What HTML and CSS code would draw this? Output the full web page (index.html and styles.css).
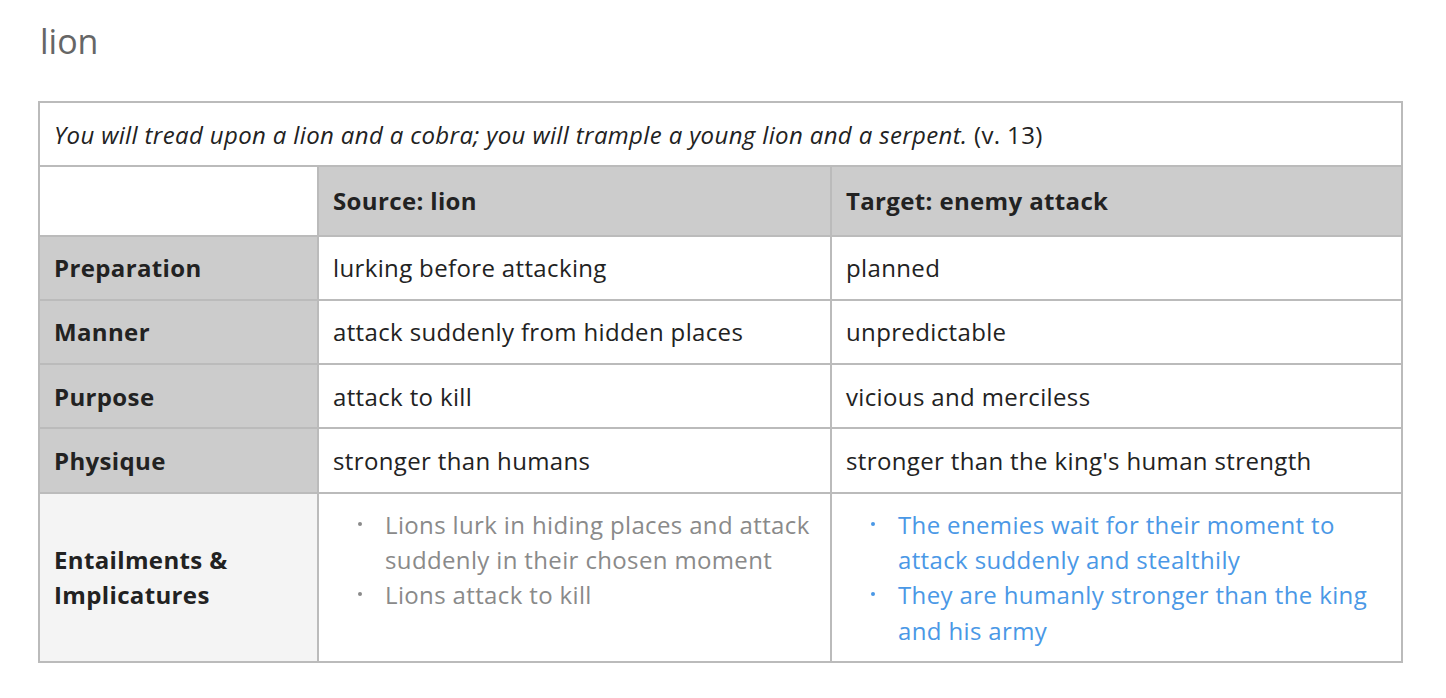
FILE: index.html
```html
<!DOCTYPE html>
<html>
<head>
<meta charset="utf-8">
<link rel="stylesheet" href="styles.css">
</head>
<body>
<div class="page">
  <h1 class="title">lion</h1>
  <table class="meta">
    <colgroup>
      <col class="c1"><col class="c2"><col class="c3">
    </colgroup>
    <tr>
      <td colspan="3" class="verse"><em>You will tread upon a lion and a cobra; you will trample a young lion and a serpent.</em> (v. 13)</td>
    </tr>
    <tr class="head">
      <td class="blank"></td>
      <th>Source: lion</th>
      <th>Target: enemy attack</th>
    </tr>
    <tr>
      <th class="rowh">Preparation</th>
      <td>lurking before attacking</td>
      <td>planned</td>
    </tr>
    <tr>
      <th class="rowh">Manner</th>
      <td>attack suddenly from hidden places</td>
      <td>unpredictable</td>
    </tr>
    <tr>
      <th class="rowh">Purpose</th>
      <td>attack to kill</td>
      <td>vicious and merciless</td>
    </tr>
    <tr>
      <th class="rowh">Physique</th>
      <td>stronger than humans</td>
      <td>stronger than the king's human strength</td>
    </tr>
    <tr class="ent">
      <th class="rowh light">Entailments &amp;<br>Implicatures</th>
      <td>
        <ul class="list gray">
          <li>Lions lurk in hiding places and attack suddenly in their chosen moment</li>
          <li>Lions attack to kill</li>
        </ul>
      </td>
      <td>
        <ul class="list blue">
          <li>The enemies wait for their moment to attack suddenly and stealthily</li>
          <li>They are humanly stronger than the king and his army</li>
        </ul>
      </td>
    </tr>
  </table>
</div>
</body>
</html>
```

FILE: styles.css
```css
html, body {
  margin: 0;
  padding: 0;
  background: #fff;
}
body {
  font-family: "Open Sans", "DejaVu Sans", sans-serif;
  color: #222;
}
.page {
  padding: 14px 38px 0 38px;
}
.title {
  font-size: 34px;
  font-weight: 400;
  color: #666;
  margin: 0 0 0 2px;
  line-height: 54px;
}
.meta {
  margin-top: 33px;
  border-collapse: collapse;
  width: 1363px;
  table-layout: fixed;
  font-size: 24px;
  letter-spacing: 0.36px;
  line-height: 35.3px;
}
.c1 { width: 279px; }
.c2 { width: 513px; }
.c3 { width: 571px; }
.meta td, .meta th {
  border: 2px solid #bbb;
  padding: 13.5px 14px;
  text-align: left;
  vertical-align: middle;
}
.meta th {
  font-weight: 700;
}
.verse {
  padding: 14px 14px;
}
.verse em {
  font-style: italic;
}
.head th, .head td {
  padding-top: 16px;
  padding-bottom: 16px;
}
.head th {
  background: #ccc;
}
.head .blank {
  background: #fff;
}
.rowh {
  background: #ccc;
}
.rowh.light {
  background: #f4f4f4;
}
.ent td, .ent th {
  padding-top: 13px;
  padding-bottom: 13px;
}
.ent td {
  vertical-align: top;
}
.list {
  margin: 0;
  padding-left: 52px;
  list-style: none;
}
.list li {
  position: relative;
}
.list li::before {
  content: "";
  position: absolute;
  left: -27px;
  top: 15px;
  width: 4px;
  height: 4px;
  border-radius: 50%;
  background: currentColor;
}
.gray { color: #8a8a8a; }
.blue { color: #4a98e6; }
```
